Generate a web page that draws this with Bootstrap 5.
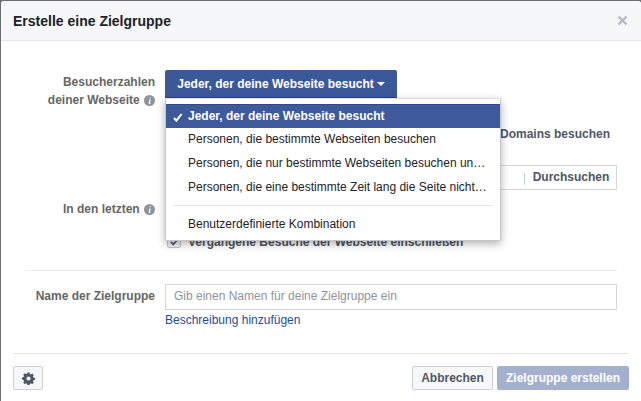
<!DOCTYPE html>
<html lang="de">
<head>
<meta charset="utf-8">
<title>Erstelle eine Zielgruppe</title>
<link href="https://cdn.jsdelivr.net/npm/bootstrap@5.3.0/dist/css/bootstrap.min.css" rel="stylesheet">
<style>
html,body{height:401px;overflow:hidden}
body{background:#6e6e6e;font-family:"Liberation Sans",Arial,sans-serif;font-size:12px;color:#4e5665}
.dlg{margin-left:1px;width:640px;height:401px;margin-top:1px;background:#fff;position:relative;border-radius:3px 3px 0 0}
.dlg-head{height:40px;background:#f6f7f8;border-bottom:1px solid #e5e5e5;padding:0 13px 0 12px;border-radius:3px 3px 0 0}
.dlg-title{font-size:14px;font-weight:700;color:#1d2129;margin:0;line-height:38px}
.dlg-body{height:360px}
.lab{width:154px;text-align:right;font-weight:700;color:#666;line-height:18px;font-size:12px;flex:none}
.ico{display:inline-block;vertical-align:-2px;margin-left:1px}
.mainbtn{background:#3b5998;border:0;border-bottom:1px solid #2f477a;color:#fff;font-weight:700;font-size:12px;height:28px;width:232px;border-radius:2px 2px 0 0;padding:1px 0 0;position:absolute;left:164px;top:69px}
.caret{display:inline-block;border:4.5px solid transparent;border-top-color:#fff;border-bottom:0;margin-left:3px;vertical-align:2px}
.menu{position:absolute;left:164px;top:97px;width:336px;height:143px;background:#fff;border:1px solid #c5c6c9;border-top-color:#ddd;border-radius:2px;box-shadow:0 3px 9px rgba(0,0,0,.3);padding:5px 0 0;z-index:5}
.mi{height:24px;line-height:23px;padding-left:22px;font-size:12px;color:#1d2129;white-space:nowrap;position:relative}
.mi.on{background:#3f5a9b;border-top:1px solid #314a85;color:#fff;font-weight:700;line-height:22px}
.mi svg{position:absolute;left:7px;top:8px}
.sep{height:1px;background:#e5e5e5;margin:5px 7px 7px}
.behind{position:absolute;font-weight:700;color:#4e5665;font-size:12px;white-space:nowrap}
.urlbox{position:absolute;left:164px;top:164px;width:452px;height:25px;border:1px solid #d3d6db;background:#fff}
.srch{position:absolute;right:0;top:0;height:23px;line-height:23px;width:92px;padding-left:2px;text-align:center;font-weight:700;color:#4e5665}
.srch::before{content:"";position:absolute;left:0;top:7px;height:12px;width:1px;background:#c7cfdf}
.chk{position:absolute;left:166px;top:233px;width:14px;height:14px;border:1px solid #c5c6c9;border-radius:2px;background:#f0f1f3}
.chk svg{display:block;margin:3px 0 0 2px}
.rule1{position:absolute;left:24px;right:24px;top:269px;height:1px;background:#e9eaed}
.name-in{position:absolute;left:164px;top:283px;width:452px;height:26px;border:1px solid #d3d6db;border-radius:0;font-size:12px;padding:0 8px 2px;font-family:inherit;color:#4e5665}
.name-in::placeholder{color:#90949c;opacity:1}
.desc{position:absolute;left:164px;top:310px;color:#1f4c96;text-decoration:none;font-size:12px}
.rule2{position:absolute;left:12px;right:12px;top:352px;height:1px;background:#e5e5e5}
.foot{position:absolute;left:12px;right:12px;top:365px}
.fbtn{height:24px;border:1px solid #ccd0d5;background:#f6f7f8;border-radius:2px;font-weight:700;font-size:12px;color:#4e5665;padding:0;line-height:22px}
.gear{width:30px;background:#f6f7f8}
.cancel{width:81px}
.create{width:132px;background:#a3b1cf;border-color:#a3b1cf;color:#fff;border-radius:2px;margin-left:4px}
</style>
</head>
<body>
<div class="dlg">
  <div class="dlg-head d-flex align-items-center justify-content-between">
    <h1 class="dlg-title">Erstelle eine Zielgruppe</h1>
    <svg width="11" height="11" viewBox="0 0 11 11"><path d="M1.5 1.5l8 8M9.5 1.5l-8 8" stroke="#b5b8be" stroke-width="2.4"/></svg>
  </div>
  <div class="dlg-body">
    <div class="lab position-absolute" style="left:0;top:72px">Besucherzahlen<br>deiner Webseite <svg class="ico" width="11" height="11" viewBox="0 0 11 11"><circle cx="5.5" cy="5.5" r="5.5" fill="#8f949c"/><path d="M5.8 2.2h1.1l-.2 1.1H5.6zM5.2 4.4h1.5l-.8 3.6h.8l-.1.8H4.5l.8-3.6h-.6z" fill="#fff"/></svg></div>
    <button class="mainbtn" type="button">Jeder, der deine Webseite besucht<span class="caret"></span></button>
    <div class="behind" style="left:499px;top:124px">Domains besuchen</div>
    <div class="urlbox"><div class="srch">Durchsuchen</div></div>
    <div class="lab position-absolute" style="left:0;top:199px">In den letzten <svg class="ico" width="11" height="11" viewBox="0 0 11 11"><circle cx="5.5" cy="5.5" r="5.5" fill="#8f949c"/><path d="M5.8 2.2h1.1l-.2 1.1H5.6zM5.2 4.4h1.5l-.8 3.6h.8l-.1.8H4.5l.8-3.6h-.6z" fill="#fff"/></svg></div>
    <div class="chk"><svg width="9" height="8" viewBox="0 0 9 8"><path d="M1 4l2.4 2.4L8 1" fill="none" stroke="#5a6478" stroke-width="1.8"/></svg></div>
    <div class="behind" style="left:187px;top:232px">Vergangene Besuche der Webseite einschließen</div>
    <div class="menu">
      <div class="mi on"><svg width="10" height="9" viewBox="0 0 10 9"><path d="M1 5l2.4 2.6L8.6 1" fill="none" stroke="#fff" stroke-width="2"/></svg>Jeder, der deine Webseite besucht</div>
      <div class="mi">Personen, die bestimmte Webseiten besuchen</div>
      <div class="mi">Personen, die nur bestimmte Webseiten besuchen un…</div>
      <div class="mi">Personen, die eine bestimmte Zeit lang die Seite nicht…</div>
      <div class="sep"></div>
      <div class="mi">Benutzerdefinierte Kombination</div>
    </div>
    <div class="rule1"></div>
    <div class="lab position-absolute" style="left:0;top:286px">Name der Zielgruppe</div>
    <input class="name-in" type="text" placeholder="Gib einen Namen für deine Zielgruppe ein">
    <a class="desc" href="#">Beschreibung hinzufügen</a>
    <div class="rule2"></div>
    <div class="foot d-flex align-items-center">
      <button class="fbtn gear" type="button" aria-label="Einstellungen"><svg width="13" height="13" viewBox="0 0 13 13" class="d-block mx-auto"><path fill="#4e5665" fill-rule="evenodd" d="M5.4.5h2.2l.3 1.6 1 .4 1.3-.9 1.6 1.6-.9 1.3.4 1 1.6.3v2.2l-1.6.3-.4 1 .9 1.3-1.6 1.6-1.3-.9-1 .4-.3 1.6H5.4l-.3-1.6-1-.4-1.3.9-1.6-1.6.9-1.3-.4-1L.1 7.6V5.4l1.6-.3.4-1-.9-1.3 1.6-1.6 1.3.9 1-.4zM6.5 4.4a2.1 2.1 0 1 0 0 4.2 2.1 2.1 0 0 0 0-4.2z"/></svg></button>
      <button class="fbtn cancel ms-auto" type="button">Abbrechen</button>
      <button class="fbtn create" type="button">Zielgruppe erstellen</button>
    </div>
  </div>
</div>
<script src="https://cdn.jsdelivr.net/npm/bootstrap@5.3.0/dist/js/bootstrap.bundle.min.js"></script>
</body>
</html>
